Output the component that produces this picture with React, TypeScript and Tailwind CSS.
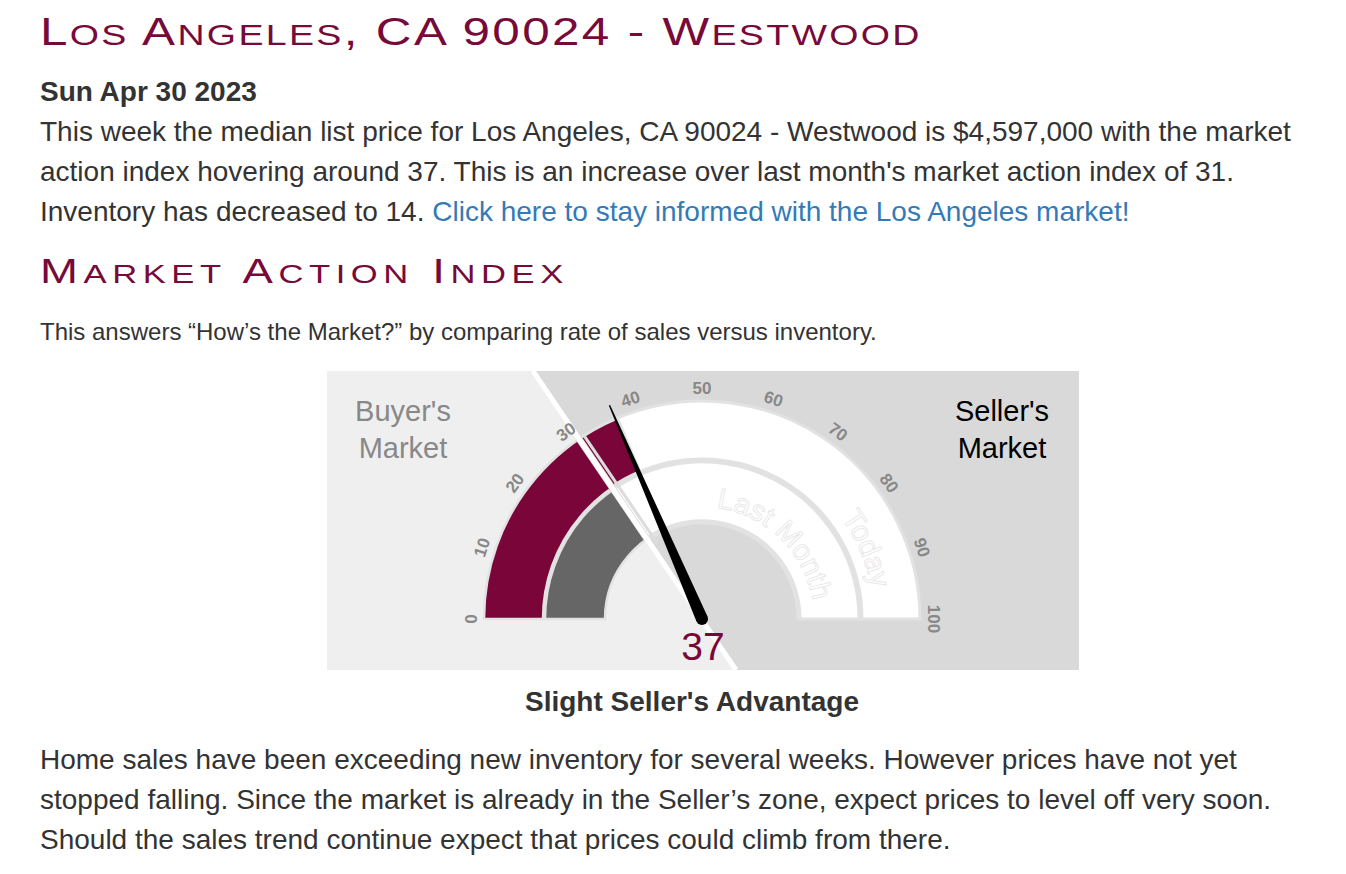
import React from "react";

const CX = 375;
const CY = 248;
const RED = "#7a0639";
const FONT = "'Liberation Sans', Arial, sans-serif";

function pt(v: number, r: number): [number, number] {
  const a = (Math.PI * v) / 100;
  return [CX - r * Math.cos(a), CY - r * Math.sin(a)];
}

function sector(v1: number, v2: number, r1: number, r2: number): string {
  const [ax, ay] = pt(v1, r2);
  const [bx, by] = pt(v2, r2);
  const [cx, cy] = pt(v2, r1);
  const [dx, dy] = pt(v1, r1);
  return `M${ax},${ay} A${r2},${r2} 0 0 1 ${bx},${by} L${cx},${cy} A${r1},${r1} 0 0 0 ${dx},${dy} Z`;
}

function arcPath(r: number, v1 = 0, v2 = 100): string {
  const [ax, ay] = pt(v1, r);
  const [bx, by] = pt(v2, r);
  return `M${ax},${ay} A${r},${r} 0 0 1 ${bx},${by}`;
}

function SmallCaps({ text }: { text: string }) {
  const runs = text.match(/[a-z]+|[^a-z]+/g) || [];
  return (
    <>
      {runs.map((r, i) =>
        /^[a-z]/.test(r) ? (
          <span key={i} className="text-[0.76em] leading-none uppercase">
            {r}
          </span>
        ) : (
          <span key={i} className="leading-none">
            {r}
          </span>
        )
      )}
    </>
  );
}

function Gauge() {
  const a31 = (Math.PI * 31) / 100;
  const nx = Math.sin(a31);
  const ny = -Math.cos(a31);
  const s1 = pt(31, 88);
  const s2 = pt(31, 217);
  const off = 5.5;
  const a37 = (Math.PI * 37) / 100;
  const px = Math.sin(a37);
  const py = -Math.cos(a37);
  const tip = pt(37, 233);
  const needle = [
    [tip[0] + px * 0.7, tip[1] + py * 0.7],
    [tip[0] - px * 0.7, tip[1] - py * 0.7],
    [CX - px * 6, CY - py * 6],
    [CX + px * 6, CY + py * 6],
  ]
    .map((p) => p.join(","))
    .join(" ");
  const labels = [0, 10, 20, 30, 40, 50, 60, 70, 80, 90, 100];
  const band = "#e2e2e2";
  return (
    <svg width="752" height="299" viewBox="0 0 752 299" className="block">
      <defs>
        <clipPath id="leftClip">
          <polygon points="0,0 202,0 405,299 0,299" />
        </clipPath>
        <clipPath id="rightClip">
          <polygon points="210,0 752,0 752,299 413,299" />
        </clipPath>
        <path id="lmPath" d={arcPath(112)} />
        <path id="tdPath" d={arcPath(172)} />
      </defs>
      <polygon points="0,0 206,0 409,299 0,299" fill="#efefef" />
      <polygon points="206,0 752,0 752,299 409,299" fill="#d9d9d9" />

      <g clipPath="url(#leftClip)">
        <path d={sector(0, 45, 159, 218)} fill={RED} stroke={band} strokeWidth="2.5" />
        <path d={sector(0, 45, 97, 157)} fill="#666666" stroke={band} strokeWidth="2.5" />
      </g>
      <g clipPath="url(#rightClip)">
        <path d={arcPath(96, 15, 100)} fill="none" stroke="#e2e2e2" strokeWidth="3" />
        <path d={sector(20, 37.3, 160, 218)} fill={RED} stroke={band} strokeWidth="3" />
        <path d={sector(37.3, 100, 160, 218)} fill="#ffffff" stroke={band} strokeWidth="3" />
        <path d={sector(20, 100, 98, 157)} fill="#ffffff" stroke={band} strokeWidth="3" />
        <text fontFamily={FONT} fontSize="29" fill="#ffffff" stroke="#e6e6e6" strokeWidth="0.8">
          <textPath href="#lmPath" startOffset="190">
            Last Month
          </textPath>
        </text>
        <text fontFamily={FONT} fontSize="29" fill="#ffffff" stroke="#e6e6e6" strokeWidth="0.8">
          <textPath href="#tdPath" startOffset="432">
            Today
          </textPath>
        </text>
      </g>

      <line x1="206" y1="0" x2="409" y2="299" stroke="#ffffff" strokeWidth="5" />
      <line
        x1={s1[0] + nx * off}
        y1={s1[1] + ny * off}
        x2={s2[0] + nx * off}
        y2={s2[1] + ny * off}
        stroke="#dcdcdc"
        strokeWidth="3"
      />

      {labels.map((v) => {
        const [x, y] = pt(v, 231);
        return (
          <text
            key={v}
            x={x}
            y={y}
            transform={`rotate(${v * 1.8 - 90} ${x} ${y})`}
            textAnchor="middle"
            dominantBaseline="central"
            fontFamily={FONT}
            fontWeight="bold"
            fontSize="17"
            fill="#888888"
          >
            {v}
          </text>
        );
      })}

      <polygon points={needle} fill="#000000" />
      <circle cx={CX} cy={CY} r="6" fill="#000000" />

      <text x={CX + 1} y="289" textAnchor="middle" fontFamily={FONT} fontSize="39" fill={RED}>
        37
      </text>

      <text textAnchor="middle" fontFamily={FONT} fontSize="29" fill="#888888">
        <tspan x="76" y="50">Buyer's</tspan>
        <tspan x="76" y="87">Market</tspan>
      </text>
      <text textAnchor="middle" fontFamily={FONT} fontSize="29" fill="#000000">
        <tspan x="675" y="50">Seller's</tspan>
        <tspan x="675" y="87">Market</tspan>
      </text>
    </svg>
  );
}

export default function App() {
  return (
    <div className="bg-white min-h-[874px] font-['Liberation_Sans',Arial,sans-serif] text-[#333333]">
      <div className="pl-10 w-[1344px]">
        <h1 className="mt-2 h-12 text-[38px] leading-[48px] text-[#770a3a]">
          <span className="inline-block origin-left scale-x-[1.3] tracking-[1.8px] whitespace-nowrap">
            <SmallCaps text="Los Angeles, CA 90024 - Westwood" />
          </span>
        </h1>
        <div className="mt-4 text-[28px] leading-10 font-bold">Sun Apr 30 2023</div>
        <p className="max-w-[1275px] text-[28px] leading-10">
          This week the median list price for Los Angeles, CA 90024 - Westwood is $4,597,000 with the
          market action index hovering around 37. This is an increase over last month's market action
          index of 31. Inventory has decreased to 14.{" "}
          <a className="text-[#337ab7]">Click here to stay informed with the Los Angeles market!</a>
        </p>
        <h2 className="mt-[15px] h-12 text-[35px] leading-[48px] text-[#770a3a]">
          <span className="inline-block origin-left scale-x-[1.3] tracking-[4.3px] whitespace-nowrap">
            <SmallCaps text="Market Action Index" />
          </span>
        </h2>
        <p className="mt-[21px] text-[24px] leading-8">
          This answers “How’s the Market?” by comparing rate of sales versus inventory.
        </p>
        <div className="mt-[23px] ml-[287px]">
          <Gauge />
        </div>
        <div className="mt-3 text-center text-[28px] leading-10 font-bold">Slight Seller's Advantage</div>
        <p className="mt-[18px] max-w-[1275px] text-[28px] leading-10">
          Home sales have been exceeding new inventory for several weeks. However prices have not yet
          stopped falling. Since the market is already in the Seller’s zone, expect prices to level off
          very soon. Should the sales trend continue expect that prices could climb from there.
        </p>
      </div>
    </div>
  );
}
